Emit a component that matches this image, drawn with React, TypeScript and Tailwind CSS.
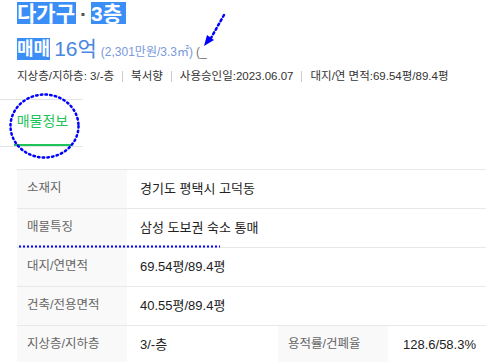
import React from "react";

const rows: { label: string; value: string }[] = [
    { label: "소재지", value: "경기도 평택시 고덕동" },
    { label: "매물특징", value: "삼성 도보권 숙소 통매" },
    { label: "대지/연면적", value: "69.54평/89.4평" },
    { label: "건축/전용면적", value: "40.55평/89.4평" },
];

const info = ["지상층/지하층: 3/-층", "북서향", "사용승인일:2023.06.07", "대지/연 면적:69.54평/89.4평"];

export default function App() {
    return (
        <div
            className="relative w-[486px] h-[362px] overflow-hidden bg-white text-[#222]"
            style={{ fontFamily: '"Liberation Sans", "Noto Sans CJK KR", sans-serif' }}
        >
            <div className="pl-[17px] pt-[2px]">
                <div className="flex items-center h-[22px] text-[21px] font-bold leading-none">
                    <span className="bg-[#3a8ef6] text-white h-[22px] flex items-center pr-[1px]">다가구</span>
                    <span className="mx-[4px] text-[#555]">·</span>
                    <span className="bg-[#3a8ef6] text-white h-[22px] flex items-center pr-[4px]">3층</span>
                </div>
                <div className="flex items-end mt-[14px] h-[22px]">
                    <span className="bg-[#3a8ef6] text-white h-[22px] flex items-center text-[18px] font-bold leading-none">매매</span>
                    <span className="ml-[4px] text-[21px] leading-none text-[#4a86e0] pb-[1px]">16억</span>
                    <span className="ml-[4px] text-[12px] leading-none text-[#7a98dc] pb-[2px]">(2,301만원/3.3㎡)</span>
                    <span className="ml-[3px] text-[12px] leading-none text-[#777] pb-[2px]">(_</span>
                </div>
                <div className="flex items-center mt-[11px] text-[11.5px] leading-none text-[#333] whitespace-nowrap">
                    {info.map((t, i) => (
                        <React.Fragment key={t}>
                            {i > 0 && <span className="mx-[8px] w-px h-[11px] bg-[#ccc] shrink-0" />}
                            <span>{t}</span>
                        </React.Fragment>
                    ))}
                </div>
            </div>

            <div className="mt-[16px] w-[83px] h-[48px] border-y border-[#e3e3e3] flex">
                <div className="ml-[14px] w-[57px] h-full flex items-center justify-center border-b-2 border-[#1ec35a] text-[14px] text-[#1ec35a]">
                    매물정보
                </div>
            </div>

            <div className="ml-[17px] mt-[22px] text-[13px]">
                {rows.map(r => (
                    <div key={r.label} className="flex h-[39px] border-t border-[#e8e8e8]">
                        <div className="w-[110px] shrink-0 bg-[#f9f9f9] flex items-center pl-[10px] text-[12.5px] text-[#666]">{r.label}</div>
                        <div className="flex items-center pl-[13px]">{r.value}</div>
                    </div>
                ))}
                <div className="flex h-[39px] border-t border-[#e8e8e8]">
                    <div className="w-[110px] shrink-0 bg-[#f9f9f9] flex items-center pl-[10px] text-[12.5px] text-[#666]">지상층/지하층</div>
                    <div className="w-[151px] shrink-0 flex items-center pl-[13px]">3/-층</div>
                    <div className="w-[110px] shrink-0 bg-[#f9f9f9] flex items-center pl-[10px] text-[12.5px] text-[#666]">용적률/건폐율</div>
                    <div className="shrink-0 flex items-center pl-[15px] whitespace-nowrap">128.6/58.3%</div>
                </div>
            </div>

            <svg className="absolute left-0 top-0 pointer-events-none" width="486" height="362">
                <line x1="224" y1="15" x2="211" y2="38" stroke="#0000ff" strokeWidth="2.5" strokeDasharray="2 3" strokeLinecap="round" />
                <polygon points="204,46 207,35 214,40" fill="#0000ff" />
                <ellipse cx="44.5" cy="126" rx="34" ry="31.5" fill="none" stroke="#0000ff" strokeWidth="2.5" strokeDasharray="1.5 3.2" strokeLinecap="round" />
                <line x1="19" y1="246.5" x2="220" y2="246.5" stroke="#0000ff" strokeWidth="2" strokeDasharray="2 2" />
            </svg>
        </div>
    );
}
